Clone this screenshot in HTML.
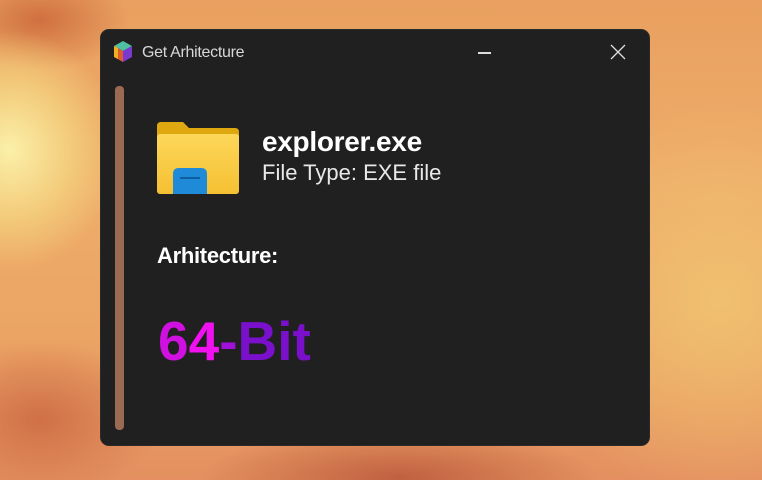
<!DOCTYPE html>
<html><head><style>
html,body{margin:0;padding:0;width:762px;height:480px;overflow:hidden}
body{position:relative;font-family:"Segoe UI","Liberation Sans",sans-serif;
background:
radial-gradient(ellipse 110px 120px at 10px 150px,#fbf0a8 0%,rgba(246,220,130,0.6) 60%,rgba(0,0,0,0) 100%),
radial-gradient(ellipse 200px 200px at 720px 300px,#f0c070 0%,rgba(0,0,0,0) 100%),
radial-gradient(ellipse 90px 50px at 40px 20px,#d07040 0%,rgba(0,0,0,0) 100%),
radial-gradient(ellipse 120px 80px at 40px 420px,#d07048 0%,rgba(0,0,0,0) 100%),
radial-gradient(ellipse 200px 50px at 400px 478px,#c06040 0%,rgba(0,0,0,0) 100%),
linear-gradient(180deg,#e9a060 0%,#eeac6a 40%,#eba464 70%,#e49060 100%);}
.win{position:absolute;left:101px;top:30px;width:548px;height:415px;background:#202020;border-radius:8px;box-shadow:0 0 0 1px #2a2a2a}
.title{position:absolute;left:41px;top:14px;font-size:16px;color:#d8d8d8;letter-spacing:-0.3px}
.bar{position:absolute;left:14px;top:56px;width:9px;height:344px;background:#9a6a52;border-radius:4px}
.t1{position:absolute;left:161px;top:96px;font-size:28px;font-weight:600;color:#fff;letter-spacing:-0.3px}
.t2{position:absolute;left:161px;top:130px;font-size:22px;color:#e8e8e8}
.t3{position:absolute;left:56px;top:213px;font-size:22px;font-weight:600;color:#fff;letter-spacing:-0.3px}
.big{position:absolute;left:57px;top:279px;font-size:55px;font-weight:700;letter-spacing:0px}
</style></head><body>
<div class="win">
<svg style="position:absolute;left:12px;top:11px" width="20" height="21" viewBox="0 0 20 21">
<polygon points="10,0 19,5 10,10 1,5" fill="#4fc0a0"/>
<polygon points="1,5 10,10 10,21 1,16" fill="#e05a30"/>
<polygon points="19,5 10,10 10,21 19,16" fill="#7a3ad0"/>
<polygon points="1,5 5,7 5,18 1,16" fill="#f0b020"/>
</svg>
<div class="title">Get Arhitecture</div>
<div style="position:absolute;left:377px;top:22px;width:13px;height:1.5px;background:#ddd"></div>
<svg style="position:absolute;left:509px;top:14px" width="16" height="16"><path d="M1 1L15 15M15 1L1 15" stroke="#ddd" stroke-width="1.3"/></svg>
<div class="bar"></div>
<svg style="position:absolute;left:56px;top:92px" width="82" height="72" viewBox="0 0 82 72">
<defs><linearGradient id="g" x1="0" y1="0" x2="0" y2="1"><stop offset="0" stop-color="#fdd75a"/><stop offset="1" stop-color="#f5c032"/></linearGradient></defs>
<path d="M0 4Q0 0 4 0H26L32 6H78Q82 6 82 10V20H0Z" fill="#e0a810"/>
<rect x="0" y="12" width="82" height="60" rx="3" fill="url(#g)"/>
<path d="M16 72V52Q16 46 22 46H44Q50 46 50 52V72Z" fill="#1e8ad8"/>
<rect x="23" y="55" width="20" height="2" fill="#0f5fa0"/>
</svg>
<div class="t1">explorer.exe</div>
<div class="t2">File Type: EXE file</div>
<div class="t3">Arhitecture:</div>
<div class="big"><span style="color:#d010e0">6</span><span style="color:#f010f0">4</span><span style="color:#a010d8">-</span><span style="color:#7a10cc">Bit</span></div>
</div>
</body></html>
